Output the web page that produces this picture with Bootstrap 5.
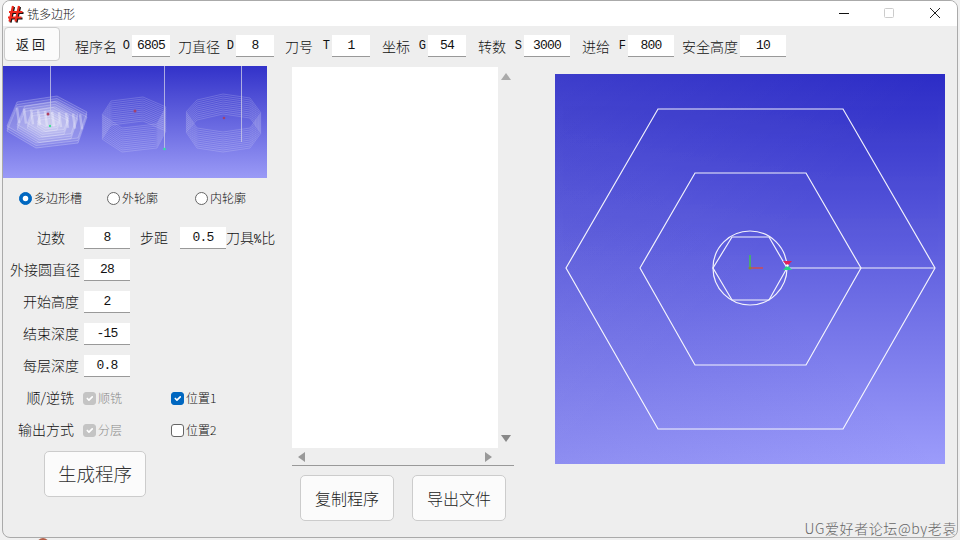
<!DOCTYPE html>
<html lang="zh">
<head>
  <meta charset="UTF-8">
  <meta name="viewport" content="width=device-width, initial-scale=1.0">
  <title>铣多边形</title>
  <link href="https://cdn.jsdelivr.net/npm/bootstrap@5.3.0/dist/css/bootstrap.min.css" rel="stylesheet">
  <style>
    body {
      background-color: #f0f0f0;
      font-family: "Noto Sans CJK SC", "Liberation Sans", sans-serif;
      font-size: 14px;
      font-weight: 300;
      color: #111;
      overflow: hidden;
    }
    .app-window {
      width: 956px;
      height: 538px;
      margin-left: 2px;
      background-color: #eeeeee;
      border: 1px solid #aaa;
      border-radius: 8px;
      overflow: hidden;
    }
    .title-bar { height: 25px; background-color: #fff; }
    .title-text { font-size: 12px; margin-left: 3px; }
    .win-btns { width: 140px; }
    .tool-bar { height: 40px; }
    .back-btn {
      width: 56px; height: 34px; margin: 0 0 5px 1px; padding: 0;
      background-color: #fbfbfb; border: 1px solid #ccc; border-radius: 4px;
      font-size: 13px; letter-spacing: 3px; color: #222;
    }
    .mono { font-family: "Liberation Mono", monospace; font-size: 12px; }
    .val {
      height: 22px; min-height: 22px; padding: 0;
      background-color: #fff;
      border: 0; border-bottom: 1px solid #999; border-radius: 0;
      font-family: "Liberation Mono", monospace; font-size: 13px; letter-spacing: -.8px;
      text-align: center; color: #111;
    }
    .w38 { width: 38px; flex: none; }
    .w46 { width: 46px; flex: none; }
    .tb-label { display: flex; justify-content: space-between; align-items: center; padding-right: 2px; white-space: nowrap; }
    .lb46 { width: 46px; }
    .lb47 { width: 47px; }
    .lb57 { width: 57px; }
    .lb58 { width: 58px; }
    .ml8 { margin-left: 8px; }
    .ml11 { margin-left: 11px; }
    .ml12 { margin-left: 12px; }
    .ml15 { margin-left: 15px; }

    .left-col { width: 289px; flex: none; }
    .strip { width: 264px; height: 112px; }
    .shot {
      width: 88px; height: 112px;
      background: linear-gradient(180deg, #3232c9, #9a9af6);
    }
    .radio-row { height: 44px; padding: 0 0 4px 16px; }
    .radio-cell { width: 88px; font-size: 12px; }
    .form-check-input { width: 13px; height: 13px; margin: 0 2px 0 0; border-color: #666; flex: none; }
    .form-check-input:checked { background-color: #0067c0; border-color: #0067c0; }
    .form-check-input:disabled { opacity: 1; background-color: #c4c4c4; border-color: #c4c4c4; }
    .form-check-input:disabled ~ span { color: #888; opacity: 1; }
    .frm-row { height: 32px; }
    .frm-label { width: 81px; padding: 0 5px 1px 0; text-align: right; white-space: nowrap; flex: none; }
    .frm-label.pe-wide { padding-right: 19px; }
    .frm-label.pe-mid { padding-right: 10px; }
    .frm-label.pe-none { padding-right: 4px; }
    .lb-step { margin-left: 10px; width: 40px; padding-bottom: 1px; }
    .chk-cell { width: 87px; font-size: 12px; }
    .chk-first { width: 88px; margin-left: -1px; }
    .gen-btn {
      width: 102px; height: 46px; margin: 5px 0 0 41px; padding: 0;
      background-color: #fbfbfb; border: 1px solid #ccc; border-radius: 5px;
      font-size: 18.5px; font-weight: 300; color: #333;
    }

    .mid-col { width: 222px; flex: none; margin-top: 1px; }
    .code-box { height: 399px; border-bottom: 1px solid #999; }
    .code-area { width: 206px; height: 381px; background-color: #fff; }
    .vbar { width: 16px; height: 381px; padding: 6px 0; }
    .hbar { height: 17px; padding: 0 22px 0 6px; }
    .out-btn {
      width: 94px; height: 46px; padding: 0;
      background-color: #fbfbfb; border: 1px solid #ccc; border-radius: 5px;
      font-size: 16px; font-weight: 300; color: #222;
    }
    .out-btns { gap: 18px; padding: 9px 0 0 8px; }

    .view-box {
      width: 390px; height: 390px; margin: 8px 0 0 41px;
      background:
        linear-gradient(to bottom right, rgba(255,255,255,.08), transparent 50%),
        linear-gradient(to top right, rgba(40,40,170,.12), transparent 50%),
        linear-gradient(180deg, #2c2cc6, #9c9cfb);
    }
    .view-box svg, .shot svg { display: block; }
    .water-mark {
      position: absolute; right: 0; bottom: 0;
      font-size: 14px; line-height: 17px; letter-spacing: .6px;
      color: #666; white-space: nowrap;
    }
    .desk-dot {
      position: absolute; left: 37px; top: 538px;
      width: 12px; height: 12px; border-radius: 50%;
      background-color: #b5604a;
    }
  </style>
</head>
<body>
  <div class="app-window position-relative">
    <!-- Title bar -->
    <div class="title-bar d-flex align-items-center">
      <svg class="ms-1" width="17" height="18" viewBox="0 0 17 18">
        <g stroke="#111" stroke-width="2.2"><path d="M7 2 3.500 17.500M13 2 9.500 17.500M3 8h13.500M2 13.500h13.500"/></g>
        <g stroke="#ee2a1c" stroke-width="2.2"><path d="M6 1 2.500 16.500M12 1 8.500 16.500M2 7h13.500M1 12.500h13.500"/></g>
      </svg>
      <span class="title-text">铣多边形</span>
      <div class="win-btns ms-auto d-flex">
        <svg width="140" height="25" viewBox="0 0 140 25">
          <path d="M22 12.500h10" stroke="#111" fill="none"/>
          <rect x="67.500" y="7.500" width="9" height="9" rx="1" fill="none" stroke="#ccc"/>
          <path d="M113 7l10 10M123 7l-10 10" stroke="#222" fill="none"/>
        </svg>
      </div>
    </div>

    <!-- Toolbar -->
    <div class="tool-bar d-flex align-items-center">
      <button class="back-btn" type="button">返回</button>
      <div class="d-flex align-items-center ml15">
        <span class="tb-label lb57">程序名 <span class="mono">O</span></span><input class="form-control val w38" value="6805">
      </div>
      <div class="d-flex align-items-center ml8">
        <span class="tb-label lb58">刀直径 <span class="mono">D</span></span><input class="form-control val w38" value="8">
      </div>
      <div class="d-flex align-items-center ml11">
        <span class="tb-label lb47">刀号 <span class="mono">T</span></span><input class="form-control val w38" value="1">
      </div>
      <div class="d-flex align-items-center ml12">
        <span class="tb-label lb46">坐标 <span class="mono">G</span></span><input class="form-control val w38" value="54">
      </div>
      <div class="d-flex align-items-center ml12">
        <span class="tb-label lb46">转数 <span class="mono">S</span></span><input class="form-control val w46" value="3000">
      </div>
      <div class="d-flex align-items-center ml12">
        <span class="tb-label lb46">进给 <span class="mono">F</span></span><input class="form-control val w46" value="800">
      </div>
      <div class="d-flex align-items-center ml8">
        <span class="tb-label lb58">安全高度</span><input class="form-control val w46" value="10">
      </div>
    </div>

    <div class="d-flex">
      <!-- Left settings -->
      <div class="left-col">
        <div class="strip d-flex">
          <div class="shot"><svg id="shot1" width="88" height="112" viewBox="0 0 88 112"></svg></div>
          <div class="shot"><svg id="shot2" width="88" height="112" viewBox="0 0 88 112"></svg></div>
          <div class="shot"><svg id="shot3" width="88" height="112" viewBox="0 0 88 112"></svg></div>
        </div>
        <div class="radio-row d-flex align-items-center">
          <label class="radio-cell d-flex align-items-center"><input class="form-check-input" type="radio" name="mode" checked><span>多边形槽</span></label>
          <label class="radio-cell d-flex align-items-center"><input class="form-check-input" type="radio" name="mode"><span>外轮廓</span></label>
          <label class="radio-cell d-flex align-items-center"><input class="form-check-input" type="radio" name="mode"><span>内轮廓</span></label>
        </div>
        <div class="frm-row d-flex align-items-center">
          <span class="frm-label pe-wide">边数</span><input class="form-control val w46" value="8">
          <span class="lb-step">步距</span><input class="form-control val w46" value="0.5">
          <span class="text-nowrap">刀具<span class="mono">%</span>比</span>
        </div>
        <div class="frm-row d-flex align-items-center">
          <span class="frm-label pe-none">外接圆直径</span><input class="form-control val w46" value="28">
        </div>
        <div class="frm-row d-flex align-items-center">
          <span class="frm-label">开始高度</span><input class="form-control val w46" value="2">
        </div>
        <div class="frm-row d-flex align-items-center">
          <span class="frm-label">结束深度</span><input class="form-control val w46" value="-15">
        </div>
        <div class="frm-row d-flex align-items-center">
          <span class="frm-label">每层深度</span><input class="form-control val w46" value="0.8">
        </div>
        <div class="frm-row d-flex align-items-center">
          <span class="frm-label pe-mid">顺/逆铣</span>
          <label class="chk-cell chk-first d-flex align-items-center"><input class="form-check-input" type="checkbox" checked disabled><span>顺铣</span></label>
          <label class="chk-cell d-flex align-items-center"><input class="form-check-input" type="checkbox" checked><span>位置1</span></label>
        </div>
        <div class="frm-row d-flex align-items-center">
          <span class="frm-label pe-mid">输出方式</span>
          <label class="chk-cell chk-first d-flex align-items-center"><input class="form-check-input" type="checkbox" checked disabled><span>分层</span></label>
          <label class="chk-cell d-flex align-items-center"><input class="form-check-input" type="checkbox"><span>位置2</span></label>
        </div>
        <button class="gen-btn" type="button">生成程序</button>
      </div>

      <!-- Program text -->
      <div class="mid-col">
        <div class="code-box">
          <div class="d-flex">
            <div class="code-area"></div>
            <div class="vbar d-flex flex-column justify-content-between align-items-center">
              <svg width="10" height="7" viewBox="0 0 10 7"><path d="M5 0l5 7H0z" fill="#aaa"/></svg>
              <svg width="10" height="7" viewBox="0 0 10 7"><path d="M0 0h10L5 7z" fill="#888"/></svg>
            </div>
          </div>
          <div class="hbar d-flex justify-content-between align-items-center">
            <svg width="7" height="10" viewBox="0 0 7 10"><path d="M7 0v10L0 5z" fill="#999"/></svg>
            <svg width="7" height="10" viewBox="0 0 7 10"><path d="M0 0v10l7-5z" fill="#999"/></svg>
          </div>
        </div>
        <div class="out-btns d-flex">
          <button class="out-btn" type="button">复制程序</button>
          <button class="out-btn" type="button">导出文件</button>
        </div>
      </div>

      <!-- Preview -->
      <div class="view-box">
        <svg width="390" height="390" viewBox="555 74 390 390">
          <g fill="none" stroke="#fff" stroke-width="1.2" opacity=".92">
            <path d="M566 268 658 109H843L935 268 843 429H658Z"/>
            <path d="M640 268 695 173H806L861 268 806 365H695Z"/>
            <path d="M713 268 732 237H769L787 268 769 300H732Z"/>
            <circle cx="750" cy="268" r="37"/>
            <path d="M787 268H935"/>
          </g>
          <path d="M750 268V255" stroke="#3ccf3c" stroke-width="1.3"/>
          <path d="M750 268H763" stroke="#e0483c" stroke-width="1.3"/>
          <circle cx="750" cy="268" r="1.5" fill="#8a8a30"/>
          <path d="M783 261h9l-4.500 5z" fill="#e0205a"/>
          <path d="M783 270h9l-4.500-5z" fill="#24d48a"/>
          <circle cx="787.500" cy="265.500" r="1.200" fill="#fff"/>
        </svg>
      </div>
    </div>

    <div class="water-mark">UG爱好者论坛@by老袁</div>
  </div>
  <span class="desk-dot"></span>

  <script src="https://cdn.jsdelivr.net/npm/bootstrap@5.3.0/dist/js/bootstrap.bundle.min.js"></script>
  <script>
    // wireframe thumbnails, points are in panel coordinates
    function stack(svg, pts, layers, step, stroke, fill) {
      let html = "";
      for (let i = 0; i < layers; i++) {
        const p = pts.map(q => q[0] + "," + (q[1] + i * step)).join(" ");
        html += `<polygon points="${p}" fill="${fill}" stroke="${stroke}" stroke-width=".6"/>`;
      }
      svg.innerHTML += html;
    }
    function post(svg, x, y2) {
      svg.innerHTML += `<path d="M${x} 0V${y2}" stroke="#c8c8e8" stroke-width="1" opacity=".8"/>`;
    }
    function scaled(pts, s, cx, cy) {
      return pts.map(q => [cx + (q[0] - cx) * s, cy + (q[1] - cy) * s]);
    }

    const shot1 = document.getElementById("shot1");
    const hex1 = [[14, 36], [54, 30], [84, 46], [75, 72], [33, 77], [4, 60]];
    [1, .76, .52, .28].forEach(s => {
      stack(shot1, scaled(hex1, s, 46, 54), 3, 2.5, "rgba(255,255,255,.4)", "rgba(255,255,255,.09)");
    });
    // ribs of the pocket walls
    let ribs = "";
    for (let x = 14; x < 78; x += 7) {
      ribs += `<path d="M${x} ${42 + (x - 14) * .1}l2 15" stroke="rgba(255,255,255,.32)" stroke-width="2.500"/>`;
    }
    shot1.innerHTML += ribs;
    post(shot1, 47.5, 60);
    shot1.innerHTML += '<circle cx="45" cy="48" r="1.5" fill="#b04060"/><circle cx="47" cy="60" r="1.2" fill="#40e090"/>';

    const shot2 = document.getElementById("shot2");
    stack(shot2, [[20, 35], [52, 31], [75, 41], [66, 58], [31, 62], [11, 49]], 13, 2, "rgba(255,255,255,.3)", "none");
    post(shot2, 73.5, 83);
    shot2.innerHTML += '<circle cx="73.5" cy="83" r="1.3" fill="#30e0a0"/><circle cx="44" cy="45" r="1.5" fill="#a04070"/>';

    const shot3 = document.getElementById("shot3");
    stack(shot3, [[18, 34], [44, 28], [71, 32], [82, 47], [71, 62], [44, 66], [18, 62], [7, 46]], 11, 2, "rgba(255,255,255,.3)", "none");
    post(shot3, 62.5, 76);
    shot3.innerHTML += '<circle cx="45" cy="52" r="1.3" fill="#a04070"/>';
  </script>
</body>
</html>
